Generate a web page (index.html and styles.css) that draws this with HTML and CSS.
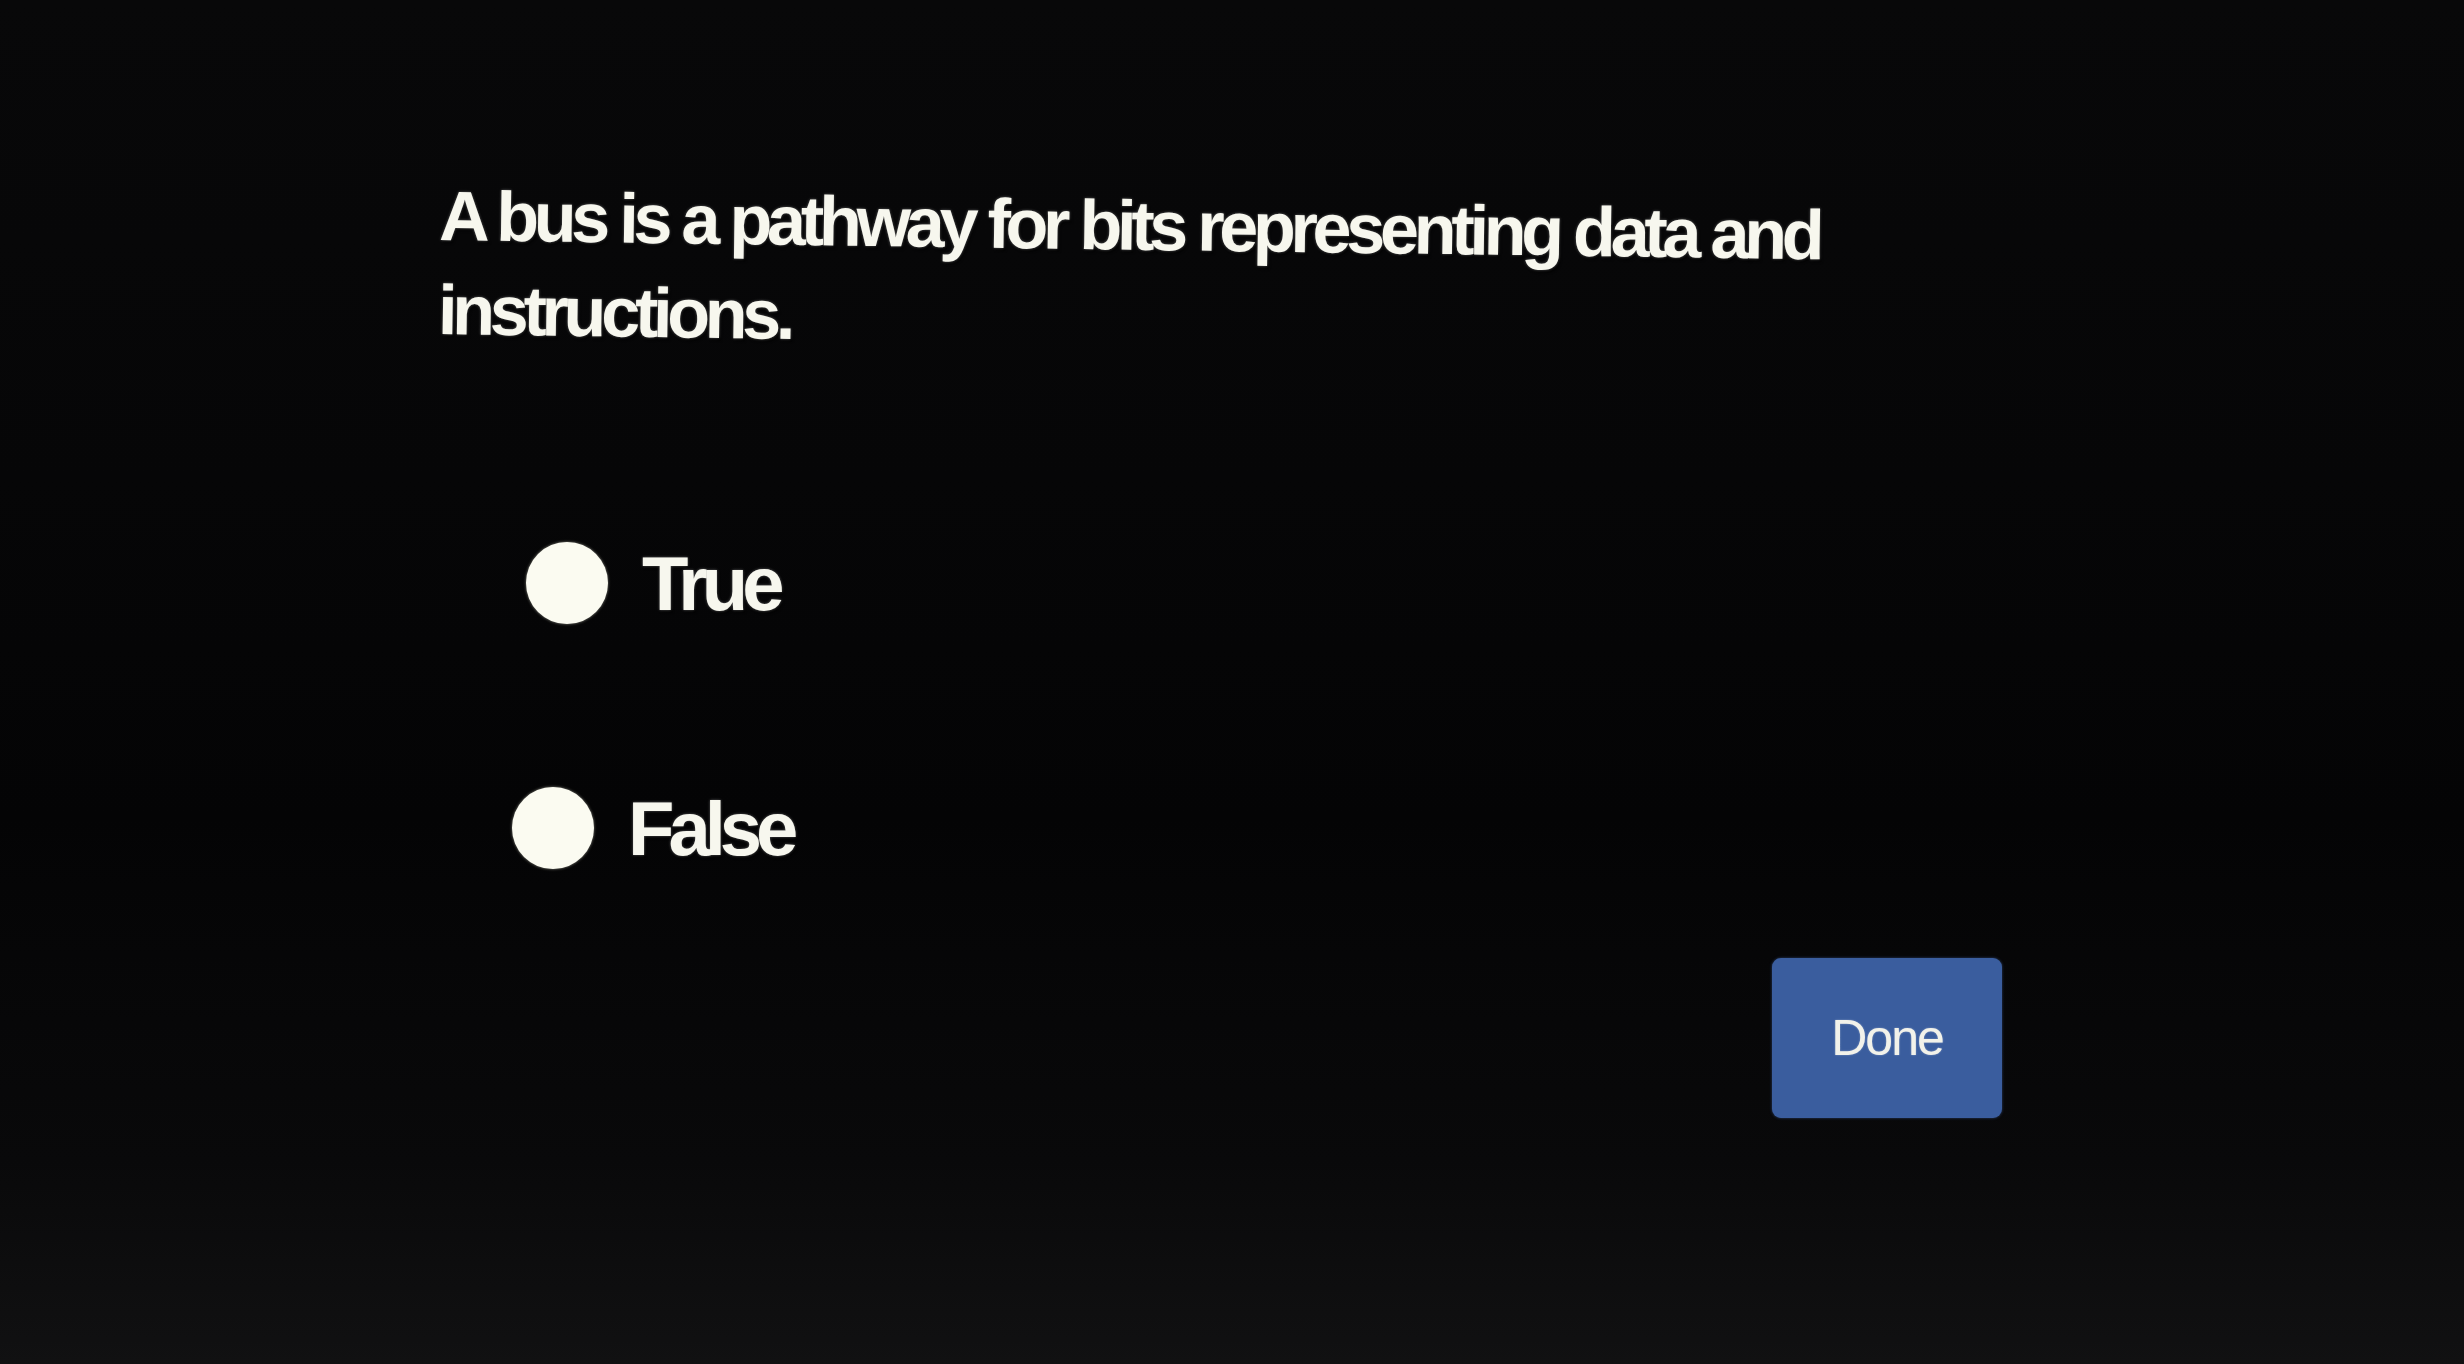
FILE: index.html
```html
<!DOCTYPE html>
<html lang="en">
<head>
<meta charset="utf-8">
<title>Quiz</title>
<link rel="stylesheet" href="styles.css">
</head>
<body>
<main class="quiz">
  <p class="question">A bus is a pathway for bits representing data and instructions.</p>
  <div class="options">
    <label class="option option-true"><span class="radio"></span><span class="label">True</span></label>
    <label class="option option-false"><span class="radio"></span><span class="label">False</span></label>
  </div>
  <div class="actions">
    <button class="done" type="button">Done</button>
  </div>
</main>
</body>
</html>
```

FILE: styles.css
```css
html, body {
  margin: 0;
  padding: 0;
  width: 2464px;
  height: 1364px;
  overflow: hidden;
}
body {
  background: linear-gradient(180deg, #080809 0%, #060607 35%, #040405 60%, #09090a 85%, #111112 100%);
  font-family: "Liberation Sans", Arial, sans-serif;
  color: #f7f7ee;
}
.quiz {
  display: flex;
  flex-direction: column;
  padding-top: 169px;
}
.question {
  margin: 0 0 0 440px;
  width: 1460px;
  font-size: 70px;
  font-weight: 700;
  line-height: 94px;
  letter-spacing: -5.2px;
  transform: rotate(0.8deg);
  transform-origin: left top;
  text-shadow: 0 0 3px rgba(255,255,255,0.35), 2px 3px 2px rgba(0,0,0,0.6);
}
.options {
  display: flex;
  flex-direction: column;
  gap: 155px;
  margin-top: 181px;
}
.option {
  display: flex;
  align-items: center;
  height: 90px;
  gap: 34px;
}
.option-true { margin-left: 526px; }
.option-false { margin-left: 512px; }
.radio {
  width: 82px;
  height: 82px;
  border-radius: 50%;
  background: #fbfbf1;
  box-shadow: 0 0 3px rgba(255,255,240,0.5);
  flex: none;
}
.label {
  font-size: 76px;
  font-weight: 700;
  letter-spacing: -6px;
  text-shadow: 0 0 3px rgba(255,255,255,0.35), 2px 3px 2px rgba(0,0,0,0.6);
}
.actions {
  display: flex;
  margin-top: 85px;
  padding-left: 1772px;
}
.done {
  width: 230px;
  height: 160px;
  border: none;
  border-radius: 9px;
  background: #3a5d9e;
  color: #f2f2ea;
  font-family: "Liberation Sans", Arial, sans-serif;
  font-size: 50px;
  letter-spacing: -2px;
  padding: 0;
  text-shadow: 0 0 2px rgba(255,255,255,0.4);
  box-shadow: 0 0 3px rgba(80,120,200,0.5);
}
```
